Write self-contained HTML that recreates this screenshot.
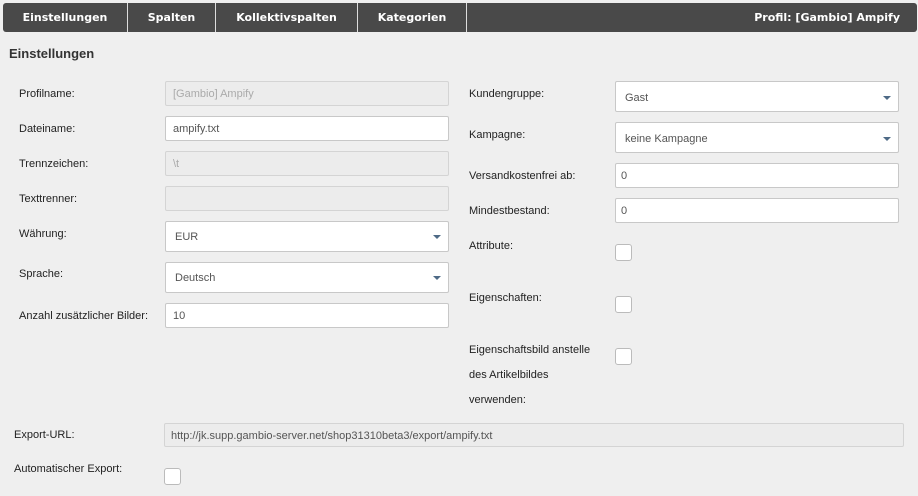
<!DOCTYPE html><html><head><style>
body{margin:0;width:918px;height:496px;background:#efefef;font-family:"Liberation Sans",sans-serif;font-size:11px;color:#222;position:relative;overflow:hidden}
.nav{position:absolute;left:3px;top:3px;width:914px;height:29px;background:#494949;border-radius:3px}
.nav span{position:absolute;top:0;height:29px;line-height:29px;color:#fff;font-family:"DejaVu Sans",sans-serif;font-weight:bold;font-size:11px;text-align:center}
.sep{position:absolute;top:0;width:1px;height:29px;background:#ddd}
.a{position:absolute;margin-top:1px}
.in{position:absolute;box-sizing:border-box;background:#fff;border:1px solid #c8c8c8;border-radius:2px;padding-left:7px;color:#555;font-size:11px}
.dis{background:#ececec;color:#aaa;border-color:#d4d4d4}
.car{position:absolute;right:7px;width:0;height:0;border-left:4px solid transparent;border-right:4px solid transparent;border-top:4px solid #4e6a86}
.cb{position:absolute;width:17px;height:17px;box-sizing:border-box;background:#fff;border:1px solid #bbb;border-radius:3px}
</style></head><body>
<div class="nav">
<span style="left:0;width:124px">Einstellungen</span><div class="sep" style="left:124px"></div>
<span style="left:125px;width:87px">Spalten</span><div class="sep" style="left:212px"></div>
<span style="left:213px;width:141px">Kollektivspalten</span><div class="sep" style="left:354px"></div>
<span style="left:355px;width:108px">Kategorien</span><div class="sep" style="left:463px"></div>
<span style="right:17px">Profil: [Gambio] Ampify</span>
</div>
<div class="a" style="left:9px;top:45px;font-size:13px;font-weight:bold;color:#333">Einstellungen</div>

<div class="a" style="left:19px;top:87px">Profilname:</div>
<div class="in dis" style="left:165px;top:81px;width:284px;height:25px;line-height:25px">[Gambio] Ampify</div>
<div class="a" style="left:19px;top:122px">Dateiname:</div>
<div class="in" style="left:165px;top:116px;width:284px;height:25px;line-height:25px">ampify.txt</div>
<div class="a" style="left:19px;top:157px">Trennzeichen:</div>
<div class="in dis" style="left:165px;top:151px;width:284px;height:25px;line-height:25px">\t</div>
<div class="a" style="left:19px;top:192px">Texttrenner:</div>
<div class="in dis" style="left:165px;top:186px;width:284px;height:25px"></div>
<div class="a" style="left:19px;top:227px">Währung:</div>
<div class="in" style="left:165px;top:221px;width:284px;height:31px;line-height:31px;padding-left:9px">EUR<div class="car" style="top:13px"></div></div>
<div class="a" style="left:19px;top:267px">Sprache:</div>
<div class="in" style="left:165px;top:262px;width:284px;height:31px;line-height:31px;padding-left:9px">Deutsch<div class="car" style="top:13px"></div></div>
<div class="a" style="left:19px;top:309px">Anzahl zusätzlicher Bilder:</div>
<div class="in" style="left:165px;top:303px;width:284px;height:25px;line-height:25px">10</div>

<div class="a" style="left:469px;top:87px">Kundengruppe:</div>
<div class="in" style="left:615px;top:81px;width:284px;height:31px;line-height:32px;padding-left:9px">Gast<div class="car" style="top:14px"></div></div>
<div class="a" style="left:469px;top:128px">Kampagne:</div>
<div class="in" style="left:615px;top:122px;width:284px;height:31px;line-height:32px;padding-left:9px">keine Kampagne<div class="car" style="top:14px"></div></div>
<div class="a" style="left:469px;top:169px">Versandkostenfrei ab:</div>
<div class="in" style="left:615px;top:163px;width:284px;height:25px;line-height:25px;padding-left:5px">0</div>
<div class="a" style="left:469px;top:204px">Mindestbestand:</div>
<div class="in" style="left:615px;top:198px;width:284px;height:25px;line-height:25px;padding-left:5px">0</div>
<div class="a" style="left:469px;top:239px">Attribute:</div>
<div class="cb" style="left:615px;top:244px"></div>
<div class="a" style="left:469px;top:291px">Eigenschaften:</div>
<div class="cb" style="left:615px;top:296px"></div>
<div class="a" style="left:469px;top:337px;line-height:25px">Eigenschaftsbild anstelle<br>des Artikelbildes<br>verwenden:</div>
<div class="cb" style="left:615px;top:348px"></div>

<div class="a" style="left:14px;top:428px">Export-URL:</div>
<div class="in dis" style="left:164px;top:423px;width:740px;height:24px;line-height:24px;padding-left:6px;color:#555">http://jk.supp.gambio-server.net/shop31310beta3/export/ampify.txt</div>
<div class="a" style="left:14px;top:462px">Automatischer Export:</div>
<div class="cb" style="left:164px;top:468px"></div>
</body></html>
